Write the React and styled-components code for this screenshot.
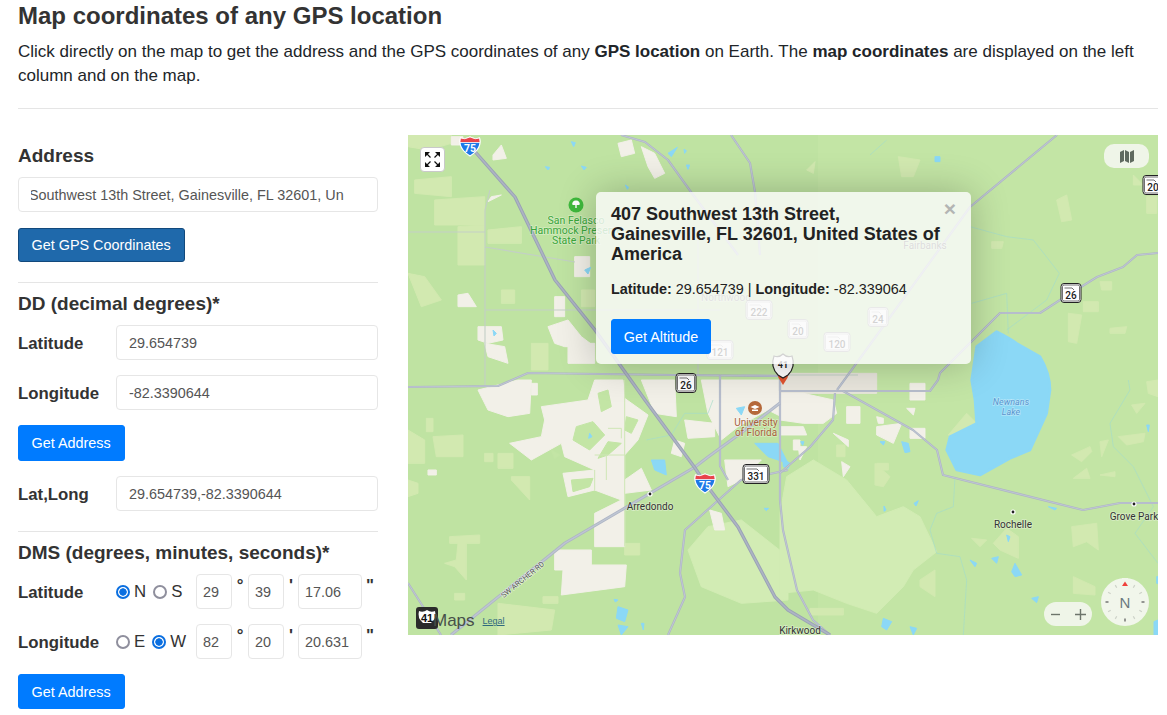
import React from 'react';
import styled, { createGlobalStyle } from 'styled-components';

const Global = createGlobalStyle`
  html, body { margin: 0; padding: 0; background: #fff; }
  body { font-family: "Liberation Sans", Arial, sans-serif; color: #212529; overflow: hidden; }
`;

const Page = styled.div`
  width: 1140px;
  margin-left: 18px;
`;
const Title = styled.h1`
  margin: 0 0 7px;
  font-size: 24px;
  line-height: 32px;
  font-weight: 700;
  color: #333;
`;
const Intro = styled.p`
  margin: 0;
  padding-top: 1px;
  height: 47px;
  font-size: 17px;
  line-height: 24px;
  b { font-weight: 700; }
`;
const Rule = styled.hr`
  margin: ${p => p.$top ?? 20}px 0 ${p => p.$bottom ?? 10}px;
  border: 0;
  border-top: 1px solid #e5e5e5;
  height: 0;
`;
const Columns = styled.div`
  display: grid;
  grid-template-columns: 360px 750px;
  column-gap: 30px;
  margin-top: 26px;
`;
const Side = styled.div`
  display: flex;
  flex-direction: column;
  padding-top: 10px;
`;
const Heading = styled.h3`
  margin: 0 0 10px;
  font-size: 19px;
  line-height: 22px;
  font-weight: 700;
  color: #333;
`;
const Input = styled.input`
  box-sizing: border-box;
  height: 35px;
  width: 100%;
  min-width: 0;
  padding: 0 12px;
  border: 1px solid #e6e6e6;
  border-radius: 4px;
  font: 14.4px "Liberation Sans", Arial, sans-serif;
  color: #555;
  background: #fff;
  outline: none;
`;
const ScrolledInput = styled(Input)`
  text-indent: -30px;
  padding-right: 11px;
`;
const Button = styled.button`
  box-sizing: border-box;
  align-self: flex-start;
  height: ${p => p.$h ?? 35}px;
  padding: 0 13px 0 12.5px;
  border: 1px solid ${p => (p.$dark ? '#12497c' : '#007bff')};
  border-radius: 3px;
  background: ${p => (p.$dark ? '#1f69ab' : '#007bff')};
  color: #fff;
  font: 14.4px "Liberation Sans", Arial, sans-serif;
  margin-top: ${p => p.$top ?? 0}px;
`;
const PopupButton = styled(Button)`
  width: 100px;
  padding: 0;
`;
const Row = styled.div`
  display: grid;
  grid-template-columns: 98px 1fr;
  align-items: center;
  margin-top: ${p => p.$top ?? 0}px;
`;
const Label = styled.label`
  padding-top: 2px;
  font-size: 16.8px;
  font-weight: 700;
  color: #333;
  line-height: 20px;
`;
const DmsBody = styled.div`
  display: flex;
  align-items: center;
`;
const RadioSet = styled.div`
  display: flex;
  align-items: center;
  width: 80px;
  font-size: 16.8px;
  color: #333;
`;
const Radio = styled.input.attrs({ type: 'radio' })`
  appearance: none;
  box-sizing: border-box;
  width: 14px;
  height: 14px;
  margin: 0 4px 0 ${p => (p.$second ? 7 : 0)}px;
  border: 2px solid #8f8f9d;
  border-radius: 50%;
  background: #fff;
  &:checked {
    border-color: #0b6fe0;
    background: radial-gradient(circle, #0b6fe0 0 3.4px, #fff 4px);
  }
`;
const Small = styled(Input)`
  width: ${p => p.$w}px;
  padding: 0 6px;
`;
const Mark = styled.span`
  width: ${p => p.$w}px;
  text-align: center;
  font-size: 16.8px;
  font-weight: 700;
  color: #333;
  align-self: flex-start;
  line-height: 24px;
`;

const MapBox = styled.div`
  position: relative;
  width: 750px;
  height: 500px;
  overflow: hidden;
  background: #c3e5a5;
`;
const MapArt = styled.svg`
  display: block;
  width: 750px;
  height: 500px;
  font-family: Roboto, "Liberation Sans", sans-serif;
`;
const Popup = styled.div`
  position: absolute;
  left: 188px;
  top: 57px;
  width: 375px;
  box-sizing: border-box;
  padding: 12px 28px 10px 15px;
  border-radius: 5px;
  background: rgba(250, 250, 250, 0.82);
  box-shadow: 0 0 38px rgba(0, 0, 0, 0.24);
`;
const PopupTitle = styled.h4`
  margin: 0;
  font-size: 18px;
  line-height: 20px;
  font-weight: 700;
  color: #222;
`;
const PopupCoords = styled.p`
  margin: 15px 0 20px;
  font-size: 14.4px;
  line-height: 20px;
  color: #222;
  white-space: nowrap;
`;
const Close = styled.span`
  position: absolute;
  right: 15px;
  top: 5px;
  font-size: 21px;
  line-height: 24px;
  font-weight: 700;
  color: #b3b5b3;
`;
const FullScreen = styled.div`
  position: absolute;
  left: 12px;
  top: 12px;
  width: 25px;
  height: 25px;
  border: 1px solid #c9c9c9;
  border-radius: 4px;
  background: #fff;
  box-sizing: border-box;
  display: flex;
  align-items: center;
  justify-content: center;
`;
const Pill = styled.div`
  position: absolute;
  display: flex;
  align-items: center;
  justify-content: ${p => p.$justify || 'center'};
  box-sizing: border-box;
  background: rgba(241, 246, 235, 0.95);
`;
const MapType = styled(Pill)`
  right: 9px;
  top: 9px;
  width: 45px;
  height: 24px;
  border-radius: 10px;
`;
const ZoomPill = styled(Pill)`
  right: 66px;
  bottom: 9px;
  width: 48px;
  height: 24px;
  border-radius: 12px;
  padding: 0 6px;
`;
const CompassBox = styled.svg`
  position: absolute;
  right: 9px;
  bottom: 9px;
`;
const Attribution = styled.div`
  position: absolute;
  left: 8px;
  bottom: 6px;
  display: flex;
  align-items: flex-end;
  height: 24px;
`;
const MapsWord = styled.span`
  margin: 0 0 -2px -5px;
  font: 17px/21px "Liberation Sans", Arial, sans-serif;
  color: #47504a;
`;
const Legal = styled.a`
  margin: 0 0 2px 8px;
  font: 9px/12px "Liberation Sans", Arial, sans-serif;
  color: #2f6a7d;
  text-decoration: underline;
`;

const C = {
  base: '#c3e5a5', cream: '#f2f0e8', lime: '#d2e9b0', pale: '#d2ecb4', water: '#8bd8f6', road: '#aeb5c5', roadIn: '#bfc6d3', minor: '#c3cfc6'
};

const Road = ({ d, w = 3, dark }) => (
  <>
    <path d={d} fill="none" stroke={dark ? '#9aa2b5' : C.road} strokeWidth={w} strokeLinejoin="round" />
    <path d={d} fill="none" stroke={dark ? '#adb4c4' : C.roadIn} strokeWidth={w * 0.45} strokeLinejoin="round" />
  </>
);
const Polys = ({ fill, items }) => (
  <g fill={fill} stroke={fill} strokeWidth="3" strokeLinejoin="round">
    {items.map(p => <polygon key={p} points={p} />)}
  </g>
);

const Interstate = ({ x, y, n }) => (
  <g transform={`translate(${x - 10.5} ${y - 10})`}>
    <path d="M1 2 Q5 4 10.5 1 Q16 4 20 2 Q23 12 10.5 20 Q-2 12 1 2Z" fill="#1d78e8" stroke="#fff" strokeWidth="1.2" />
    <path d="M1 2 Q5 4 10.5 1 Q16 4 20 2 L20.6 6.5 H.4Z" fill="#e8434a" stroke="#fff" strokeWidth=".8" />
    <text x="10.5" y="15.5" textAnchor="middle" fontSize="10.5" fontWeight="700" fill="#fff">{n}</text>
  </g>
);
const StateShield = ({ x, y, n, w = 21, faded }) => (
  <g transform={`translate(${x - w / 2} ${y - 10})`}>
    <rect x=".5" y=".5" width={w - 1} height="19" rx="3" fill="#fff" stroke={faded ? '#999' : '#222'} />
    <rect x="2" y="2" width={w - 4} height="16" rx="1.5" fill="none" stroke={faded ? '#aaa' : '#333'} strokeWidth=".7" />
    <path d={`M4 5 H${w / 2 + 1} L${w / 2 + 3} 7`} fill="none" stroke={faded ? '#aaa' : '#333'} strokeWidth=".7" />
    <text x={w / 2} y="16" textAnchor="middle" fontSize="10" fontWeight="500" fill="#222">{n}</text>
  </g>
);
const Place = ({ x, y, children, size = 10, color = '#333', weight = 400, italic }) => (
  <text x={x} y={y} textAnchor="middle" fontSize={size} fill={color} fontWeight={weight} fontStyle={italic ? 'italic' : 'normal'}
    stroke="#ffffff" strokeOpacity=".35" strokeWidth="1.5" paintOrder="stroke">{children}</text>
);
const Dot = ({ x, y }) => (
  <g><circle cx={x} cy={y} r="2.6" fill="#fff" /><circle cx={x} cy={y} r="1.4" fill="#222" /></g>
);

const TerrainTop = () => (
  <g transform="translate(0 -5) scale(.33333)">
    <Polys fill={C.lime} items={[
      '20,150 130,140 130,200 20,190', '80,210 230,200 230,285 150,290 150,405 230,405 230,285 80,285',
      '280,480 320,480 320,520 280,520', '0,430 50,440 100,510 40,530', '370,640 420,640 420,720 370,720',
      '240,300 340,290 340,340 240,340', '520,480 560,480 560,530 520,530', '0,0 130,0 130,40 60,60 0,50',
    ]} />
    <Polys fill={C.cream} items={[
      '255,75 280,45 295,85 255,90', '630,40 670,30 680,70 640,80', '700,50 740,70 770,130 740,145 720,110', '500,380 545,380 545,440 500,440',
      '150,495 180,490 205,530 150,530', '210,590 280,590 285,630 240,640 210,630', '230,640 290,650 300,700 240,680',
      '440,500 470,500 470,560 440,560', '250,200 280,195 240,215', '420,590 480,570 520,620 560,650 470,650 440,640',
      '480,640 560,640 560,700 480,700', '130,20 165,20 165,45 130,45',
    ]} />
    <Polys fill={C.water} items={[
      '490,35 502,38 497,50', '780,70 808,52 790,80', '412,110 425,112 420,120', '520,108 535,112 528,120',
      '828,58 835,62 830,70', '835,105 845,105 840,118', '652,165 662,172 658,178', '530,420 548,412 540,432',
      '255,600 265,610 258,618',
    ]} />
  </g>
);
const TerrainRightTop = () => (
  <g transform="translate(372 -5) scale(.33333)">
    <Polys fill={C.lime} items={[
      '355,80 420,90 400,140 365,140', '830,210 860,195 875,270 845,275', '865,550 905,555 890,640 865,635',
      '960,455 995,455 995,480 965,480', '910,515 955,515 955,545 910,545', '990,595 1040,590 1035,610 990,610',
      '1060,135 1090,165 1060,165', '635,335 670,335 665,355 635,355', '80,120 105,95 100,130', '1100,200 1130,200 1130,250 1100,250',
    ]} />
    <Polys fill={C.water} items={['465,80 480,80 480,95 465,95']} />
    <path d="M570 290 L680 320 L760 330 L838 430 L800 510 L680 600 M680 490 L575 520 M680 490 L685 610 M270 75 L320 30" fill="none" stroke="#a5dcc8" strokeWidth="2" />
  </g>
);
const TerrainBottom = () => (
  <g transform="translate(0 245) scale(.33333)">
    <Polys fill={C.pale} items={['840,510 900,440 1000,420 1140,530 1140,660 1000,670 880,620']} />
    <Polys fill={C.lime} items={[
      '75,170 165,165 165,230 85,230', '0,150 50,180 50,250 0,250',
      '125,470 215,465 215,490 175,490 175,600 140,560 110,550 145,540 150,490 125,490',
      '270,670 440,690 430,750 270,765', '270,220 315,220 315,265 270,265', '310,290 365,290 365,360 310,300',
      '650,490 695,490 695,525 650,525', '0,300 30,310 30,340 0,350', '55,115 75,115 75,155 55,155',
      '230,220 255,220 255,245 230,245', '405,650 450,650 450,670 405,670', '140,640 170,640 170,660 140,660',
    ]} />
    <Polys fill={C.cream} items={[
      '210,30 330,0 370,0 365,100 300,110 240,90',
      '400,80 540,60 560,0 645,0 650,55 720,105 690,180 650,225 650,300 700,265 730,330 650,340 650,500 560,500 560,400 640,360 560,330 480,350 465,280 560,270 470,230 460,190 370,240 305,190 400,170 410,120',
      '440,510 550,510 550,555 655,555 650,620 460,645 465,570 440,570',
      '700,0 800,0 805,110 740,100', '830,120 920,130 920,170 840,175', '800,180 830,190 820,230 790,220',
      '880,0 1140,0 1140,120 1080,90 990,140 940,180 900,100',
      '950,240 1060,240 1000,300 960,320', '905,390 940,400 950,450 920,450', '60,270 85,270 85,285 60,285',
      '370,10 388,10 388,45 370,45',
    ]} />
    <Polys fill={C.base} items={[
      '505,140 555,125 590,165 545,210 495,180', '570,235 600,185 640,190 600,225', '430,210 455,225 440,235',
      '490,300 555,295 545,320 495,335', '570,40 600,30 610,80 580,95', '655,110 690,120 670,160 650,150',
    ]} />
    <path d="M560 225 H650 M595 225 V300 M560 270 V330 M650 0 V500 M600 145 H640 V175" fill="none" stroke="#cfe6b6" strokeWidth="3" />
    <Polys fill={C.water} items={[
      '630,680 660,690 650,725 625,715', '630,735 660,740 640,765', '730,240 770,240 775,285 740,270',
      '1040,190 1110,190 1140,250 1080,230', '545,160 552,170 542,175', '985,85 1010,80 1000,105', '1068,385 1082,385 1075,392',
      '618,658 630,660 622,666', '700,730 708,730 706,750',
    ]} />
    <path d="M715 180 L790 165 L830 100 L900 100 L915 60" fill="none" stroke="#a5dcc8" strokeWidth="2" />
  </g>
);
const TerrainRightBottom = () => (
  <g transform="translate(372 245) scale(.33333)">
    <Polys fill={C.pale} items={['20,290 100,240 200,300 290,410 370,380 420,410 470,515 400,570 370,620 290,700 200,670 100,630 0,640 0,400']} />
    <Polys fill={C.lime} items={[
      '875,225 930,200 935,215 905,245', '960,185 985,180 965,230', '880,295 920,265 930,295', '960,285 1005,275 1005,290',
      '1015,170 1095,160 1090,185 1040,195', '1055,75 1095,70 1070,100', '875,440 950,430 955,510 920,485 880,500',
      '880,590 945,620 945,645 880,640', '640,490 680,445 715,470 715,535 660,510', '575,475 620,480 600,500',
      '1100,5 1134,0 1134,50 1105,40', '285,250 330,290 310,320 285,315', '420,600 465,570 465,650 420,620',
      '505,165 560,100 590,130 520,170', '90,685 190,685 190,705 90,705', '290,250 325,250 325,270 290,270', '170,195 195,195 195,230 170,230',
    ]} />
    <Polys fill="#e9e6dd" items={['0,-20 290,-20 290,40 0,40']} />
    <Polys fill={C.cream} items={[
      '0,40 70,40 160,60 170,100 130,130 70,130 0,120', '390,10 435,10 435,60 390,60', '200,80 240,80 240,130 200,130',
      '290,140 365,130 340,190 290,165', '390,145 435,145 435,175 390,175', '185,245 210,260 190,290',
      '0,140 70,140 80,165 0,165', '40,180 60,180 60,210 40,210', '160,160 205,180 205,200', '380,85 405,85 400,105',
      '290,110 310,115 310,130 295,130', '55,200 80,200 60,240',
    ]} />
    <path d="M1045 0 L1050 30 L990 130 L1000 200 L1060 260 L1120 380 L1065 460 L1134 550 M525 290 L520 380 L470 400 L450 450 L470 520 L540 530 L560 600 L550 765" fill="none" stroke="#a5dcc8" strokeWidth="2" />
    <path d="M590 -100 L650 -145 Q690 -125 710 -110 L780 -70 Q810 -20 810 30 L800 100 L750 210 L690 235 L600 285 L530 270 L500 210 L510 170 L590 130 L585 60 L575 0Z" fill={C.water} stroke={C.water} strokeWidth="8" strokeLinejoin="round" />
    <Polys fill={C.water} items={[
      '300,185 315,185 310,195', '365,185 385,190 390,215 375,218', '680,465 690,470 685,485', '570,540 590,550 585,560',
      '635,535 655,530 650,550', '705,550 725,585 705,590 695,575', '755,655 775,650 770,668', '310,715 335,725 320,750 305,740',
      '390,740 410,745 400,765', '1100,135 1108,135 1105,155', '805,380 830,385 825,390', '402,370 415,362 408,378', '312,378 318,390 312,394',
      '1130,590 1134,590 1134,610 1130,610', '1122,725 1134,720 1134,765 1122,765', '8,235 30,250 25,265 10,260', '62,185 72,185 68,196',
    ]} />
  </g>
);

const Roads = () => (
  <g>
    <path d="M82 55 L77 75 L77 252 M77 112 L167 127 M77 175 L187 175 M0 97 L77 97 M187 175 H312 M333 240 H450 M290 100 V240"
      fill="none" stroke={C.minor} strokeWidth="1.1" />
    <Road w={2.2} d="M213 0 L237 7 L260 25 L283 57 L330 120" />
    <Road w={2.2} d="M323 0 L342 28 L347 57 L352 120" />
    <Road w={2.2} d="M0 252 L90 251 L120 238 L267 240 L372 241 L372 256 L522 256 L530 245 L532 238 L592 178 L632 178 L652 165 L689 142 L715 132 L729 120 L750 118" />
    <Road w={2.2} d="M429 255 L562 72 L649 0" />
    <Road w={2.2} d="M435 256 L505 295 L529 315 L535 340 L675 375 L712 368 L750 368" />
    <Road w={2.2} d="M372 365 L375 395 L389 455 L405 485 L422 500 M372 240 V365" />
    <Road w={2.2} d="M312 240 V331 L320 345" />
    <Road w={2.2} d="M380 335 L333 345 L277 395 L272 438 L277 462 L260 500" />
    <Road w={2.2} d="M372 338 L402 312 L425 285 L427 258" />
    <Road w={2.2} d="M0 448 L33 500" />
    <Road w={3} d="M43 500 L157 408 L287 332 L300 322 L333 298 L372 268" />
    <Road w={3.4} dark d="M62 11 L107 62 L147 145 L187 195 L237 265 L287 333 L297 348 L330 392 L367 462 L380 475 L422 500" />
  </g>
);

const MapDrawing = () => (
  <MapArt viewBox="0 0 750 500">
    <rect width="750" height="500" fill={C.base} />
    <rect width="410" height="500" fill="#bfe3a2" />
    <TerrainTop />
    <TerrainRightTop />
    <TerrainBottom />
    <TerrainRightBottom />
    <Roads />
    <text x="115" y="447" textAnchor="middle" fontSize="7.5" fill="#555" stroke="#fff" strokeOpacity=".5" strokeWidth="1.5" paintOrder="stroke" transform="rotate(-39 115 445)">SW ARCHER RD</text>

    <Interstate x={62} y={11} n="75" />
    <Interstate x={297} y={348} n="75" />
    <StateShield x={278} y={248} n="26" />
    <StateShield x={663} y={158} n="26" />
    <StateShield x={745} y={50} n="20" />
    <StateShield x={348} y={339} n="331" w={27} />
    <StateShield x={351} y={175} n="222" w={27} faded />
    <StateShield x={312} y={215} n="121" w={27} faded />
    <StateShield x={390} y={194} n="20" faded />
    <StateShield x={470} y={182} n="24" faded />
    <StateShield x={429} y={207} n="120" w={27} faded />

    <circle cx="168" cy="70" r="7.5" fill="#3fb93d" />
    <path d="M168 65.5 a3.6 3.2 0 0 1 3.4 4.6 h-2.7 v3 h-1.4 v-3 h-2.7 a3.6 3.2 0 0 1 3.4 -4.6z" fill="#fff" />
    <Place x={168} y={89} size={10.5} color="#3aa63a">San Felasco</Place>
    <Place x={168} y={99} size={10.5} color="#3aa63a">Hammock Preserve</Place>
    <Place x={168} y={109} size={10.5} color="#3aa63a">State Park</Place>
    <Place x={318} y={166} color="#777">Northwood</Place>
    <Place x={517} y={114} color="#555">Fairbanks</Place>

    <circle cx="347" cy="273" r="7" fill="#b5683a" />
    <path d="M342.5 272 L347 270 L351.5 272 L347 274Z M344 274.5 H350 V276 H344Z" fill="#fff" />
    <Place x={348} y={291} color="#a9623c">University</Place>
    <Place x={348} y={301} color="#a9623c">of Florida</Place>
    <Dot x={242} y={359} />
    <Place x={242} y={375} size={10}>Arredondo</Place>
    <Dot x={605} y={377} />
    <Place x={605} y={393} size={10}>Rochelle</Place>
    <Dot x={726} y={369} />
    <Place x={726} y={385} size={10}>Grove Park</Place>
    <Place x={392} y={499} size={10}>Kirkwood</Place>
    <Place x={603} y={270} size={9} color="#5c95cf" italic>Newnans</Place>
    <Place x={603} y={280} size={9} color="#5c95cf" italic>Lake</Place>

    <path d="M375 250 L370.6 243 A5 5 0 1 1 379.4 243Z" fill="#e0532f" />
    <path d="M366 221 Q371 223 375 219 Q379 223 384 221 Q388 232 380 240 L375 243 L370 240 Q362 232 366 221Z" fill="#fff" stroke="#222" strokeWidth="1.2" />
    <text x="375" y="233" textAnchor="middle" fontSize="9" fontWeight="700" fill="#222">41</text>
  </MapArt>
);

const Compass = () => {
  const ticks = Array.from({ length: 12 }, (_, i) => i * 30);
  return (
    <CompassBox width="48" height="48" viewBox="0 0 48 48">
      <circle cx="24" cy="24" r="24" fill="#f1f6eb" />
      {ticks.map(a => (
        <line key={a} x1="24" y1="4.5" x2="24" y2="7.5" stroke={a % 90 === 0 ? '#555' : '#cdd2c8'} strokeWidth="1.2" transform={`rotate(${a} 24 24)`} />
      ))}
      <rect x="21" y="0" width="6" height="8" fill="#f1f6eb" />
      <polygon points="24,3.5 27,8 21,8" fill="#f0423c" />
      <text x="24" y="29.5" textAnchor="middle" fontSize="15" fontFamily='"Liberation Sans", sans-serif' fill="#6c7a80">N</text>
    </CompassBox>
  );
};

const DmsRow = ({ label, top, a, b, first, deg, min, sec }) => (
  <Row $top={top}>
    <Label>{label}</Label>
    <DmsBody>
      <RadioSet>
        <Radio name={label} defaultChecked={first} />{a}
        <Radio name={label} $second defaultChecked={!first} />{b}
      </RadioSet>
      <Small $w={36} defaultValue={deg} />
      <Mark $w={16}>°</Mark>
      <Small $w={36} defaultValue={min} />
      <Mark $w={14}>'</Mark>
      <Small $w={64} defaultValue={sec} />
      <Mark $w={16}>"</Mark>
    </DmsBody>
  </Row>
);

export default function App() {
  return (
    <Page>
      <Global />
      <Title>Map coordinates of any GPS location</Title>
      <Intro>
        Click directly on the map to get the address and the GPS coordinates of any <b>GPS location</b> on Earth. The <b>map coordinates</b> are displayed on the left column and on the map.
      </Intro>
      <Rule $top={21} $bottom={0} />
      <Columns>
        <Side>
          <Heading>Address</Heading>
          <ScrolledInput defaultValue="407 Southwest 13th Street, Gainesville, FL 32601, Un" />
          <Button $dark $h={34} $top={16}>Get GPS Coordinates</Button>
          <Rule />
          <Heading>DD (decimal degrees)*</Heading>
          <Row>
            <Label>Latitude</Label>
            <Input defaultValue="29.654739" />
          </Row>
          <Row $top={15}>
            <Label>Longitude</Label>
            <Input defaultValue="-82.3390644" />
          </Row>
          <Button $top={15} $h={36}>Get Address</Button>
          <Row $top={15}>
            <Label>Lat,Long</Label>
            <Input defaultValue="29.654739,-82.3390644" />
          </Row>
          <Rule />
          <Heading>DMS (degrees, minutes, seconds)*</Heading>
          <DmsRow label="Latitude" a="N" b="S" first deg="29" min="39" sec="17.06" />
          <DmsRow label="Longitude" top={15} a="E" b="W" first={false} deg="82" min="20" sec="20.631" />
          <Button $top={15}>Get Address</Button>
        </Side>
        <MapBox>
          <MapDrawing />
          <Popup>
            <PopupTitle>407 Southwest 13th Street, Gainesville, FL 32601, United States of America</PopupTitle>
            <PopupCoords><b>Latitude:</b> 29.654739 | <b>Longitude:</b> -82.339064</PopupCoords>
            <PopupButton>Get Altitude</PopupButton>
            <Close>×</Close>
          </Popup>
          <FullScreen>
            <svg width="17" height="17" viewBox="0 0 17 17" fill="#111" stroke="#111" strokeWidth="1.2">
              <path d="M1 1h5L1 6z M16 1h-5l5 5z M1 16h5l-5-5z M16 16h-5l5-5z" stroke="none" />
              <path d="M3 3l3.5 3.5 M14 3l-3.5 3.5 M3 14l3.5-3.5 M14 14l-3.5-3.5" fill="none" />
            </svg>
          </FullScreen>
          <MapType>
            <svg width="14" height="13" viewBox="0 0 14 13" fill="#5f6a5f">
              <path d="M0 2l4-2v11l-4 2z M5 0l4 2v11l-4-2z M10 2l4-2v11l-4 2z" />
            </svg>
          </MapType>
          <ZoomPill $justify="space-between">
            <svg width="11" height="11" viewBox="0 0 11 11" stroke="#6d756b" strokeWidth="1.4"><path d="M1 5.5h9" /></svg>
            <svg width="11" height="11" viewBox="0 0 11 11" stroke="#6d756b" strokeWidth="1.4"><path d="M0 5.5h11M5.5 0v11" /></svg>
          </ZoomPill>
          <Compass />
          <Attribution>
            <svg width="22" height="22" viewBox="0 0 22 22">
              <rect width="22" height="22" rx="3" fill="#2b2b2b" />
              <path d="M3 4 Q7 6 11 3 Q15 6 19 4 Q21 11 15 16 H7 Q1 11 3 4Z" fill="#fff" />
              <text x="11" y="15" textAnchor="middle" fontSize="11" fontWeight="700" fontFamily='"Liberation Sans", sans-serif' fill="#111">41</text>
            </svg>
            <MapsWord>Maps</MapsWord>
            <Legal>Legal</Legal>
          </Attribution>
        </MapBox>
      </Columns>
    </Page>
  );
}
